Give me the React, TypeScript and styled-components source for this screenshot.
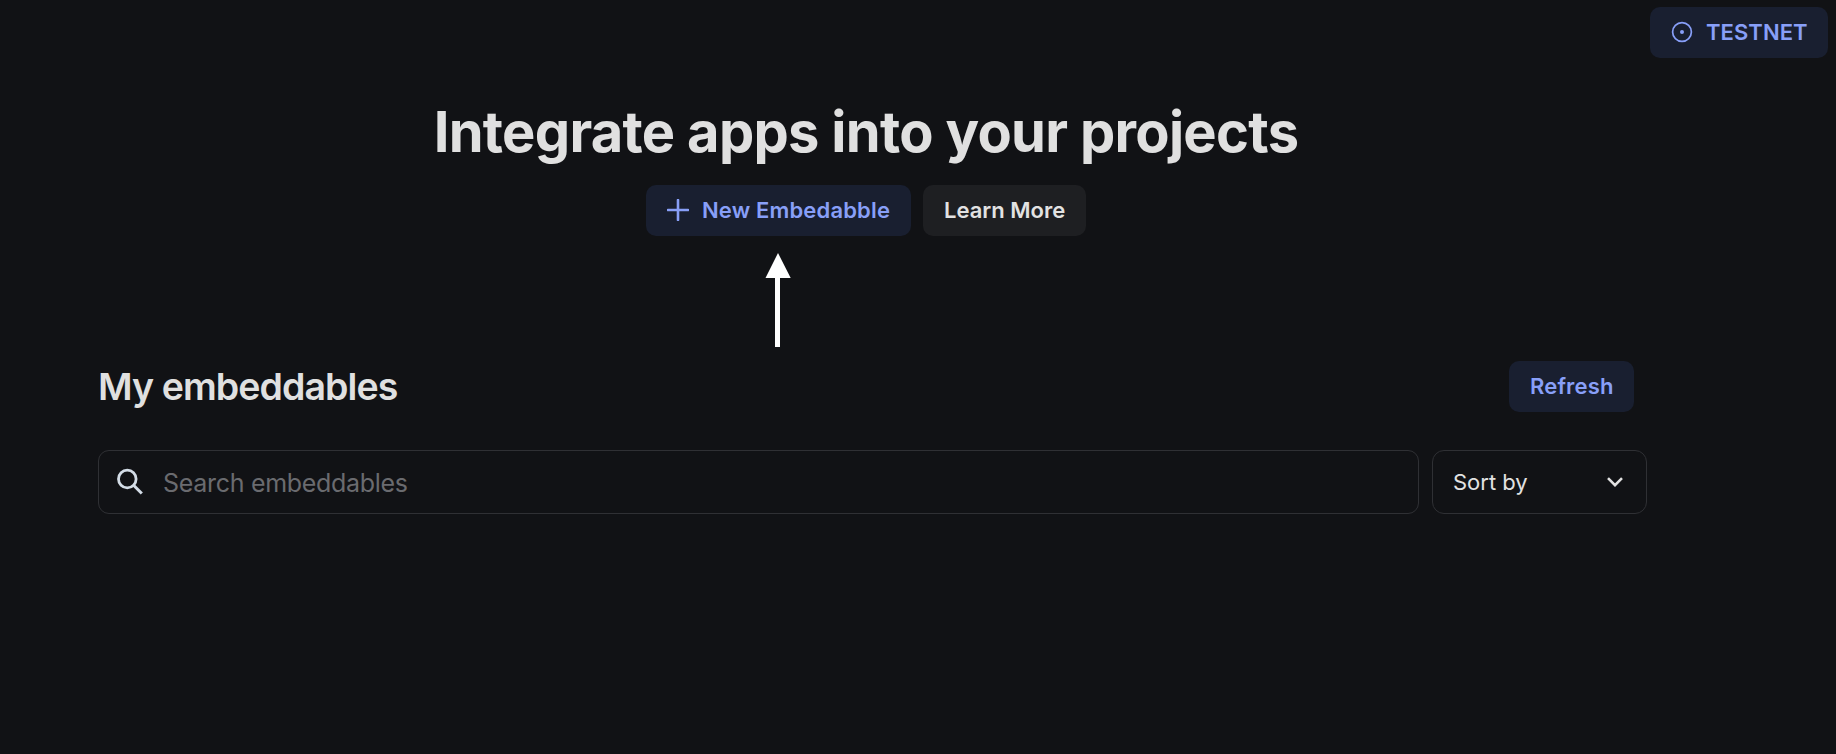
import React from 'react';
import styled, { createGlobalStyle } from 'styled-components';

const GlobalStyle = createGlobalStyle`
  *, *::before, *::after { box-sizing: border-box; }
  body {
    margin: 0;
    background: #111215;
    color: #e0e0e0;
    font-family: Inter, "Liberation Sans", sans-serif;
  }
  button, input { font-family: inherit; }
`;

const Page = styled.div`
  width: 1836px;
  height: 754px;
  overflow: hidden;
  background: #111215;
`;

const TopBar = styled.header`
  display: flex;
  justify-content: flex-end;
  padding: 7px 8px 0 0;
`;

const Button = styled.button<{ $tone: 'accent' | 'neutral'; $width: number; $tracking?: number }>`
  display: flex;
  align-items: center;
  width: ${(p) => p.$width}px;
  height: 51px;
  padding: 0 0 1px 21px;
  border: 0;
  border-radius: 10px;
  background: ${(p) => (p.$tone === 'accent' ? '#191f30' : '#1e1f22')};
  color: ${(p) => (p.$tone === 'accent' ? '#889ff8' : '#e2e2e2')};
  font-size: 22px;
  font-weight: 600;
  letter-spacing: ${(p) => p.$tracking ?? 0}px;
  white-space: nowrap;

  svg { flex: none; }
`;

const Main = styled.main`
  width: 1536px;
  margin-left: 98px;
`;

const Hero = styled.section`
  display: flex;
  flex-direction: column;
  align-items: center;
  padding-top: 39px;
`;

const Title = styled.h1`
  margin: 0;
  height: 88px;
  font-size: 56px;
  line-height: 70px;
  font-weight: 700;
  letter-spacing: -0.7px;
  white-space: nowrap;
`;

const Actions = styled.div`
  display: flex;
  gap: 12px;
`;

const PointedAction = styled.div`
  position: relative;
`;

const Pointer = styled.svg`
  position: absolute;
  top: 68px;
  left: 119px;
`;

const ListHeader = styled.div`
  display: flex;
  align-items: center;
  justify-content: space-between;
  margin-top: 125px;
`;

const SectionTitle = styled.h2`
  margin: 0;
  font-size: 37.5px;
  line-height: 51px;
  font-weight: 600;
  letter-spacing: -0.92px;
  white-space: nowrap;
`;

const Filters = styled.div`
  display: flex;
  gap: 13px;
  width: 1549px;
  margin-top: 38px;
`;

const SearchField = styled.label`
  display: flex;
  align-items: center;
  flex: 1;
  height: 64px;
  padding: 0 0 1px 18px;
  border: 1px solid #2f3034;
  border-radius: 11px;

  svg { flex: none; }
`;

const SearchInput = styled.input`
  flex: 1;
  min-width: 0;
  margin-left: 19px;
  padding: 2px 0 0;
  border: 0;
  outline: 0;
  background: transparent;
  color: #e2e2e2;
  font-size: 25px;
  letter-spacing: -0.3px;

  &::placeholder { color: #6a6b6f; opacity: 1; }
`;

const SortSelect = styled.button`
  display: flex;
  align-items: center;
  justify-content: space-between;
  width: 215px;
  height: 64px;
  padding: 0 23px 0 20px;
  border: 1px solid #2f3034;
  border-radius: 12px;
  background: transparent;
  color: #e2e2e2;
  font-size: 22px;
  white-space: nowrap;
`;

const IconLabel = styled.span<{ $gap: number }>`
  margin-left: ${(p) => p.$gap}px;
`;

const TargetIcon = () => (
  <svg width="22" height="22" viewBox="0 0 22 22" fill="none">
    <circle cx="11" cy="11" r="9.4" stroke="currentColor" strokeWidth="1.7" />
    <circle cx="11" cy="11" r="2" fill="currentColor" />
  </svg>
);

const PlusIcon = () => (
  <svg width="22" height="22" viewBox="0 0 22 22" fill="none">
    <path d="M11 1V21M1 11H21" stroke="currentColor" strokeWidth="2.6" strokeLinecap="round" />
  </svg>
);

const SearchIcon = () => (
  <svg width="27" height="27" viewBox="0 0 27 27" fill="none" stroke="#d3dce6" strokeWidth="2.8">
    <circle cx="10.3" cy="11" r="8.8" />
    <path d="M16.6 17.3L24.8 25.5" strokeWidth="3" />
  </svg>
);

const ChevronIcon = () => (
  <svg width="16" height="10" viewBox="0 0 16 10" fill="none">
    <path d="M1 1.2L8 8.2L15 1.2" stroke="#e2e2e2" strokeWidth="2.6" />
  </svg>
);

export default function App() {
  return (
    <Page>
      <GlobalStyle />
      <TopBar>
        <Button $tone="accent" $width={178} $tracking={0.05}>
          <TargetIcon />
          <IconLabel $gap={13}>TESTNET</IconLabel>
        </Button>
      </TopBar>
      <Main>
        <Hero>
          <Title>Integrate apps into your projects</Title>
          <Actions>
            <PointedAction>
              <Button $tone="accent" $width={265} $tracking={0.16}>
                <PlusIcon />
                <IconLabel $gap={13}>New Embedabble</IconLabel>
              </Button>
              <Pointer width="26" height="94" viewBox="0 0 26 94">
                <path d="M13 0L25.7 25H15V94H10V25H0.5Z" fill="#fff" />
              </Pointer>
            </PointedAction>
            <Button $tone="neutral" $width={163}>Learn More</Button>
          </Actions>
        </Hero>
        <ListHeader>
          <SectionTitle>My embeddables</SectionTitle>
          <Button $tone="accent" $width={125} $tracking={0.15}>Refresh</Button>
        </ListHeader>
        <Filters>
          <SearchField>
            <SearchIcon />
            <SearchInput placeholder="Search embeddables" />
          </SearchField>
          <SortSelect>
            Sort by
            <ChevronIcon />
          </SortSelect>
        </Filters>
      </Main>
    </Page>
  );
}
